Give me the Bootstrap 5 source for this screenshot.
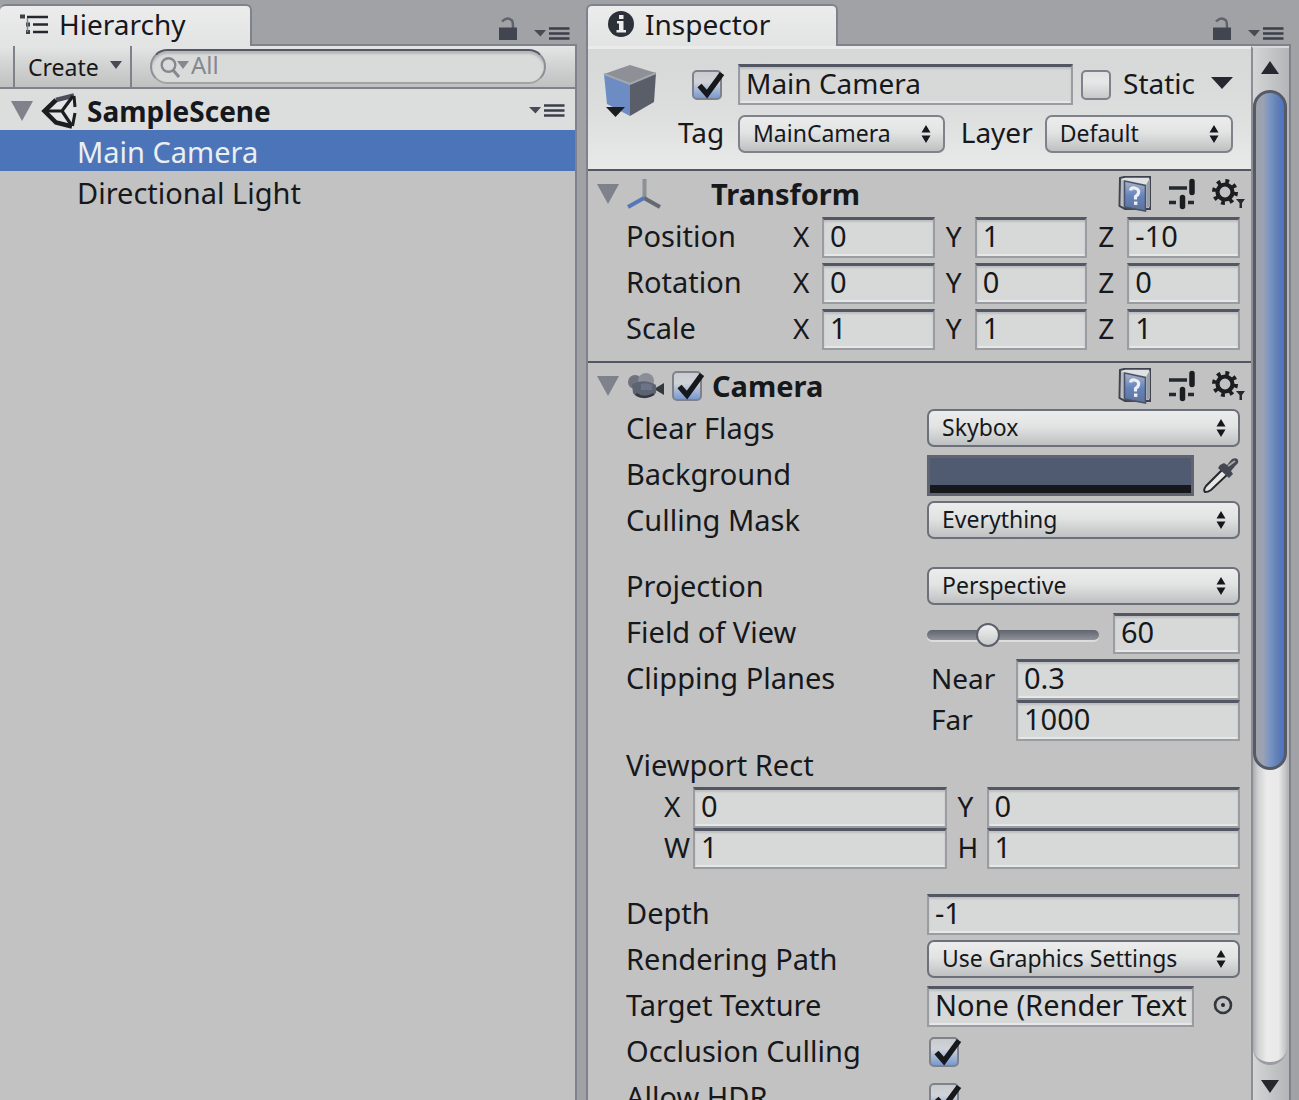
<!DOCTYPE html>
<html lang="en">
<head>
<meta charset="utf-8">
<meta name="viewport" content="width=device-width, initial-scale=1">
<title>Scene editor</title>
<link href="https://cdn.jsdelivr.net/npm/bootstrap@5.3.0/dist/css/bootstrap.min.css" rel="stylesheet">
<style>
:root{--ink:#16181b;--line:#7f828b;--dark:#535763;--face:#c2c2c2;--field:#d7d9d8;--blue:#4c75b9}
body{font-family:"Noto Sans","Open Sans",sans-serif;font-size:28px;line-height:38px;color:var(--ink);background:#a1a2a6}
.workspace{display:grid;grid-template-columns:577fr 705fr;column-gap:9px;padding:4px 8px 0 0;height:100vh;overflow:hidden}
.pane{min-width:0;min-height:0}
.tab-strip{height:42px;border-bottom:2px solid var(--line);padding-right:7px}
.pane-tab{width:252px;height:42px;margin-bottom:-2px;background:linear-gradient(#ececec,#e2e3e3);border:2px solid var(--line);border-bottom:0;border-radius:6px 6px 0 0;color:var(--ink);padding:0 0 4px 19px;text-align:left}
.hier .pane-tab{border-left:0}
.strip-tools{padding-bottom:3px}
.tab-name{padding-left:2px}
.pane-body{border:solid var(--line);border-width:0 2px;background:var(--face)}
.hier .pane-body{border-left:0}
.plain-btn{border:0;background:none;padding:0;color:inherit;line-height:0}
.tool-bar{height:43px;background:linear-gradient(#e4e5e5,#d2d3d3 45%,#c0c1c1);border-bottom:2px solid var(--line);padding:0 29px 0 13px}
.create-btn{width:119px;height:41px;border:solid var(--line);border-width:0 2px;background:none;font-size:23px;padding:0 8px 0 13px;color:var(--ink)}
.create-btn svg{color:#474b55}
.search-box{height:35px;border:2px solid #8b8e96;border-top-color:var(--dark);border-bottom-color:#a2a3a8;border-radius:18px;background:#d9dbda;box-shadow:inset 0 3px 2px #b6b8ba;padding-left:8px;margin-left:18px}
.search-box input{border:0;outline:0;background:none;font-size:24px;line-height:28px;padding:0 0 4px;min-width:0;color:var(--ink)}
.search-box input::placeholder{color:#85888e;opacity:1}
.scene-row{height:41px;background:#dcdedd;padding:2px 10px 0 11px}
.scene-name{font-size:28px;padding-left:2px}
.tree-item{height:41px;line-height:44px;font-size:29px;padding-left:77px;color:var(--ink);text-decoration:none}
.tree-item.current{background:var(--blue);color:#eceef0}
.obj-head{height:125px;background:linear-gradient(#d6d8d8,#dcdddd 50%,#e8e9e9);border-bottom:2px solid var(--dark);border-top:3px solid #ebebeb;padding:15px 18px 0 14px}
.obj-head label{padding-bottom:3px}
.obj-head .txt{font-size:28px}
.head-key{flex:0 0 60px}
.head-key.with-tick{padding-left:14px}
.pop.tag-pop{flex:208 1 0}
.pop.layer-pop{flex:184 1 0}
.layer-key{margin:0 12px 0 16px}
.comp{padding:0 11px 11px 38px;border-bottom:2px solid var(--dark)}
.comp-head{height:46px;margin-left:-29px;margin-right:-6px}
.comp-name{font-weight:700;font-size:29px;padding-left:6px}
.comp-name.no-tick{padding-left:50px}
.prop-row{height:41px;margin-bottom:5px;font-size:29px}
.prop-row label,.prop-row span{padding-bottom:3px}
.prop-row.tight{margin-bottom:0}
.prop-row.gap-after{margin-bottom:25px}
.prop-row.view-row{padding-left:38px}
.prop-key{flex:0 0 301px}
.axis-key{flex:0 0 167px}
.letter{flex:0 0 29px;font-size:28px}
.letter-next{flex-basis:40px;padding-left:11px}
.near-key{flex:0 0 89px;padding-left:4px;font-size:28px}
.txt{min-width:0;width:100%;height:41px;border:2px solid #9a9ca1;border-top:3px solid var(--dark);border-radius:0;background:var(--field);box-shadow:inset 0 2px 2px #bcbebf,inset 0 -2px 0 #e6e7e7;padding:0 4px 5px 6px;font-size:29px;line-height:32px;color:var(--ink);outline:0}
.pop{min-width:0;width:100%;height:38px;appearance:none;border:2px solid var(--line);border-radius:7px;color:var(--ink);font-size:23px;line-height:30px;padding:0 30px 2px 13px;background:url("data:image/svg+xml,%3Csvg xmlns='http://www.w3.org/2000/svg' width='10' height='18'%3E%3Cpath d='M5 0L9.500 7.500H.5zM5 18L.5 10.500H9.500z' fill='%2316181b'/%3E%3C/svg%3E") right 12px center no-repeat,linear-gradient(#ececec,#e2e3e3 45%,#bfc0c1)}
.comp .pop{border-color:#6c707a;margin-bottom:3px}
.tick{appearance:none;flex:0 0 34px;width:34px;height:34px;margin:0;background:url("data:image/svg+xml,%3Csvg xmlns='http://www.w3.org/2000/svg' width='34' height='34'%3E%3Cdefs%3E%3ClinearGradient id='g' x2='0' y2='1'%3E%3Cstop stop-color='%23e0e1e2'/%3E%3Cstop offset='.4' stop-color='%23e6e7e7'/%3E%3Cstop offset='1' stop-color='%23c6c7c8'/%3E%3C/linearGradient%3E%3C/defs%3E%3Crect x='1' y='3' width='28' height='28' rx='4' fill='url(%23g)' stroke='%237f828b' stroke-width='2'/%3E%3C/svg%3E") no-repeat}
.tick:checked{background-image:url("data:image/svg+xml,%3Csvg xmlns='http://www.w3.org/2000/svg' width='34' height='34'%3E%3Cdefs%3E%3ClinearGradient id='g' x2='0' y2='1'%3E%3Cstop stop-color='%23c8cace'/%3E%3Cstop offset='.4' stop-color='%23d0d3d8'/%3E%3Cstop offset='1' stop-color='%237396d0'/%3E%3C/linearGradient%3E%3C/defs%3E%3Crect x='1' y='3' width='28' height='28' rx='4' fill='url(%23g)' stroke='%237f828b' stroke-width='2'/%3E%3Cpath d='M7.500 17.500L15 26L30 5.500' fill='none' stroke='%2316181b' stroke-width='5.500'/%3E%3C/svg%3E")}
.box-in{margin:0 0 2px 2px}
.swatch-btn{height:41px;border:3px solid #606470;padding:0;background:linear-gradient(#505a71 0 27px,#16181b 27px)}
.side-tool{flex:0 0 46px}
.fov{appearance:none;flex:1 1 172px;min-width:0;height:30px;margin:3px 14px 0 0;background:none}
.fov::-webkit-slider-runnable-track{height:10px;border-radius:5px;background:linear-gradient(#60646e,#8f9198);box-shadow:0 2px 0 #dcdcdc}
.fov::-webkit-slider-thumb{appearance:none;width:24px;height:24px;margin-top:-7px;border:2px solid #5c606b;border-radius:50%;background:linear-gradient(#f0f0f0,#c9cacb)}
.fov-num{flex:0 0 127px}
.scroll-col{flex:0 0 38px;background:linear-gradient(90deg,#d4d5d5,#b4b5b8);border-left:2px solid #8b8e95;border-top:2px solid #d8d8d8;padding-right:2px}
.scroll-up{height:42px}
.scroll-down{height:35px}
.scroll-track{width:34px;background:linear-gradient(90deg,#a9abae,#d0d1d1 15%,#ebebeb 40%,#e9e9e9 75%,#bcbdc0);border-radius:17px;border-bottom:3px solid #9a9ca1}
.scroll-thumb{height:70%;background:linear-gradient(90deg,#a0a2a8,#9aa2b4 25%,#7391c4 55%,#6480b4 75%,#4c75c4 96%);border:3px solid #565a66;border-radius:17px}
</style>
</head>
<body>
<svg class="position-absolute" width="0" height="0" aria-hidden="true">
  <defs><linearGradient id="bk" x2="0" y2="1"><stop stop-color="#a9b4c8"/><stop offset=".5" stop-color="#6484bd"/><stop offset="1" stop-color="#5f7299"/></linearGradient></defs>
  <symbol id="i-lock" viewBox="0 0 20 24"><path d="M4 4.500Q9-1 14 3.500Q15 5 15 11" fill="none" stroke="#5f636d" stroke-width="2.500"/><path d="M1 10.500h18V23H1z" fill="#41454f"/></symbol>
  <symbol id="i-menu" viewBox="0 0 36 14"><path d="M0 3h12L6.500 9.500z" fill="#474b55"/><path d="M15 1.500h20.500M15 6.500h20.500M15 11.500h20.500" stroke="#3b3f49" stroke-width="2.400"/></symbol>
  <symbol id="i-down" viewBox="0 0 22 20"><path d="M0 0h22L11 20z" fill="#7f828b"/></symbol>
  <symbol id="i-small" viewBox="0 0 12 8"><path d="M0 0h12L6 8z" fill="currentColor"/></symbol>
  <symbol id="i-book" viewBox="0 0 34 36"><path d="M2 2L7 .8H32V33H28L7 33L1.500 30z" fill="#dfe1e3" stroke="#3f434d" stroke-width="2"/><path d="M3 3v26l4 2V6z" fill="#b9bcc2"/><path d="M6.500 5L27.500 9.500V35L6.500 31z" fill="url(#bk)" stroke="#4b5467" stroke-width="1.600"/><path d="M28.500 8V32L32 31V2z" fill="#9a9ea8"/><path d="M12.500 14.500Q13 11.500 16.500 12Q21.500 13 20.500 17Q20 19 17.500 20.500V23.500" fill="none" stroke="#eceef0" stroke-width="3.200"/><path d="M16 25.500h3.400v3.400H16z" fill="#eceef0"/></symbol>
  <symbol id="i-sliders" viewBox="0 0 28 32"><path d="M1 10h18M1 24.500h7M20 24.500h6" stroke="#25282e" stroke-width="3.600"/><path d="M24 3.500v11M14.500 19.500v9" stroke="#1b1d21" stroke-width="5.500" stroke-linecap="round"/></symbol>
  <symbol id="i-gear" viewBox="0 0 34 32"><circle cx="13" cy="14" r="7.500" fill="none" stroke="#1b1d21" stroke-width="4.200"/><circle cx="13" cy="14" r="11" fill="none" stroke="#1b1d21" stroke-width="4" stroke-dasharray="3.800 4.840"/><path d="M24 21h9l-3 4v5h-2.500v-5z" fill="#25282e"/></symbol>
</svg>

<div class="workspace">
  <section class="pane hier d-flex flex-column" aria-label="Hierarchy">
    <div class="tab-strip d-flex justify-content-between">
      <button class="pane-tab d-flex align-items-center" type="button">
        <svg width="30" height="22" viewBox="0 0 30 22" class="me-2"><path d="M8 4h21M14 11.500h15M14 19h15" stroke="#25282e" stroke-width="2.600"/><path d="M1 1.500h5v4H1zM7 9.500h4v4H7zM7 17h4v4H7z" fill="#3c4049"/><path d="M8.500 5v14" stroke="#7f828b" stroke-width="1.400"/></svg>
        <span class="tab-name">Hierarchy</span>
      </button>
      <div class="strip-tools d-flex align-items-end gap-3">
        <button class="plain-btn" type="button" aria-label="Lock"><svg width="20" height="24"><use href="#i-lock"/></svg></button>
        <button class="plain-btn" type="button" aria-label="Hierarchy menu"><svg width="36" height="14"><use href="#i-menu"/></svg></button>
      </div>
    </div>
    <div class="pane-body flex-grow-1">
      <div class="tool-bar d-flex align-items-center">
        <button class="create-btn d-flex justify-content-between align-items-center" type="button">Create<svg width="12" height="8" class="mb-1"><use href="#i-small"/></svg></button>
        <div class="search-box d-flex align-items-center flex-grow-1">
          <svg width="31" height="22" viewBox="0 0 31 22" fill="none"><circle cx="8.500" cy="9" r="6.800" stroke="#85888e" stroke-width="2.400"/><path d="M13 14l6 7" stroke="#85888e" stroke-width="3"/><path d="M17 5h12l-6 8z" fill="#85888e"/></svg>
          <input type="search" class="flex-grow-1" placeholder="All" aria-label="Search hierarchy">
        </div>
      </div>
      <div class="scene-row d-flex align-items-center">
        <button class="plain-btn" type="button" aria-label="Collapse scene"><svg width="22" height="20"><use href="#i-down"/></svg></button>
        <svg width="36" height="38" viewBox="0 0 36 38" class="ms-2 me-2" fill="none" stroke="#1b1d21"><path d="M33 2.500L15 7.500L3.500 19L15 30.500L32 35.500L34.500 21.500V13z" fill="#e4e5e5" stroke="none"/><path d="M33 3.500L15 8" stroke="#4b4f59" stroke-width="4.500"/><path d="M15 8L3.500 19L15 30.500L31 34.500" stroke-width="4.500"/><path d="M4 19H21L32 4M21 19L31 34" stroke-width="3.200"/><path d="M33 4L34 15M34 21L31.500 34" stroke-width="3"/></svg>
        <strong class="scene-name flex-grow-1">SampleScene</strong>
        <button class="plain-btn" type="button" aria-label="Scene menu"><svg width="36" height="14"><use href="#i-menu"/></svg></button>
      </div>
      <nav class="d-flex flex-column" aria-label="Scene objects">
        <a href="#" class="tree-item current" aria-current="true">Main Camera</a>
        <a href="#" class="tree-item">Directional Light</a>
      </nav>
    </div>
  </section>

  <section class="pane d-flex flex-column" aria-label="Inspector">
    <div class="tab-strip d-flex justify-content-between">
      <button class="pane-tab d-flex align-items-center" type="button">
        <svg width="28" height="28" viewBox="0 0 28 28" class="me-2"><circle cx="14" cy="14" r="13" fill="#2c3038"/><path d="M12 5h4.500v4H12zM10 11h6.500v9H19v2.500H9.500V20H12v-6.500h-2z" fill="#ececec"/></svg>
        <span class="tab-name">Inspector</span>
      </button>
      <div class="strip-tools d-flex align-items-end gap-3">
        <button class="plain-btn" type="button" aria-label="Lock"><svg width="20" height="24"><use href="#i-lock"/></svg></button>
        <button class="plain-btn" type="button" aria-label="Inspector menu"><svg width="36" height="14"><use href="#i-menu"/></svg></button>
      </div>
    </div>
    <div class="pane-body d-flex flex-grow-1 overflow-hidden">
      <div class="flex-grow-1 overflow-hidden">
        <header class="obj-head d-flex">
          <svg width="56" height="54" viewBox="0 0 56 54" class="flex-shrink-0 me-3"><path d="M28 1L54 9L28 20L2 10z" fill="#8d9097"/><path d="M2 10L28 20V52L5 40z" fill="#6d8cc4"/><path d="M54 9L28 20V52L52 38z" fill="#5a5e69"/><path d="M2 10L28 20L54 9" fill="none" stroke="#a5a7ac" stroke-width="2"/><path d="M4 43h19l-9.500 10z" fill="#1b1d21"/></svg>
          <div class="flex-grow-1 ms-1">
            <div class="d-flex align-items-center">
              <div class="head-key with-tick d-flex"><input type="checkbox" class="tick" checked aria-label="Object active"></div>
              <input class="txt flex-grow-1" type="text" value="Main Camera" aria-label="Object name">
              <input type="checkbox" class="tick ms-2" id="st"><label for="st" class="ms-2">Static</label>
              <button class="plain-btn ms-3" type="button" aria-label="Static options"><svg width="22" height="12" viewBox="0 0 22 12" class="mb-1"><path d="M0 0h22L11 12z" fill="#25282e"/></svg></button>
            </div>
            <div class="d-flex align-items-center mt-2">
              <label for="tag" class="head-key">Tag</label>
              <select id="tag" class="pop tag-pop"><option>MainCamera</option></select>
              <label for="layer" class="layer-key">Layer</label>
              <select id="layer" class="pop layer-pop"><option>Default</option></select>
            </div>
          </div>
        </header>

        <section class="comp">
          <div class="comp-head d-flex align-items-center">
            <button class="plain-btn" type="button" aria-label="Collapse Transform"><svg width="22" height="20"><use href="#i-down"/></svg></button>
            <svg width="34" height="34" viewBox="0 0 34 34" class="ms-2" fill="none" stroke-width="4"><path d="M17.500 2v19" stroke="#8d9097"/><path d="M17 21L33 30" stroke="#646873"/><path d="M17 21L1 30" stroke="#5379b8"/></svg>
            <div class="comp-name no-tick flex-grow-1">Transform</div>
            <div class="d-flex align-items-center gap-3">
              <button class="plain-btn" type="button" aria-label="Transform help"><svg width="34" height="36"><use href="#i-book"/></svg></button>
              <button class="plain-btn" type="button" aria-label="Transform presets"><svg width="28" height="32"><use href="#i-sliders"/></svg></button>
              <button class="plain-btn" type="button" aria-label="Transform options"><svg width="34" height="32"><use href="#i-gear"/></svg></button>
            </div>
          </div>
          <div class="prop-row d-flex" role="group" aria-labelledby="kp">
            <span class="axis-key" id="kp">Position</span>
            <div class="d-flex flex-grow-1">
              <label class="letter" for="px">X</label><input class="txt" id="px" value="0">
              <label class="letter letter-next" for="py">Y</label><input class="txt" id="py" value="1">
              <label class="letter letter-next" for="pz">Z</label><input class="txt" id="pz" value="-10">
            </div>
          </div>
          <div class="prop-row d-flex" role="group" aria-labelledby="kr">
            <span class="axis-key" id="kr">Rotation</span>
            <div class="d-flex flex-grow-1">
              <label class="letter" for="rx">X</label><input class="txt" id="rx" value="0">
              <label class="letter letter-next" for="ry">Y</label><input class="txt" id="ry" value="0">
              <label class="letter letter-next" for="rz">Z</label><input class="txt" id="rz" value="0">
            </div>
          </div>
          <div class="prop-row tight d-flex" role="group" aria-labelledby="ks">
            <span class="axis-key" id="ks">Scale</span>
            <div class="d-flex flex-grow-1">
              <label class="letter" for="sx">X</label><input class="txt" id="sx" value="1">
              <label class="letter letter-next" for="sy">Y</label><input class="txt" id="sy" value="1">
              <label class="letter letter-next" for="sz">Z</label><input class="txt" id="sz" value="1">
            </div>
          </div>
        </section>

        <section class="comp">
          <div class="comp-head d-flex align-items-center">
            <button class="plain-btn" type="button" aria-label="Collapse Camera"><svg width="22" height="20"><use href="#i-down"/></svg></button>
            <svg width="37" height="26" viewBox="0 0 37 26" class="ms-2"><circle cx="8" cy="9" r="7" fill="#6e727c"/><circle cx="19" cy="8" r="8" fill="#8b8e96"/><path d="M27 16l10-6v12z" fill="#33373f"/><path d="M5 11Q17 5 29 12V20Q24 25 17 25Q9 25 6 20z" fill="#5d6471"/><path d="M14 11Q20 9 25 12V17H14z" fill="#6b7488"/><path d="M9 21Q17 27 27 21" fill="none" stroke="#33373f" stroke-width="2.500"/></svg>
            <input type="checkbox" class="tick ms-2" checked id="cam">
            <label for="cam" class="comp-name flex-grow-1">Camera</label>
            <div class="d-flex align-items-center gap-3">
              <button class="plain-btn" type="button" aria-label="Camera help"><svg width="34" height="36"><use href="#i-book"/></svg></button>
              <button class="plain-btn" type="button" aria-label="Camera presets"><svg width="28" height="32"><use href="#i-sliders"/></svg></button>
              <button class="plain-btn" type="button" aria-label="Camera options"><svg width="34" height="32"><use href="#i-gear"/></svg></button>
            </div>
          </div>
          <div class="prop-row d-flex align-items-center"><label class="prop-key" for="cf">Clear Flags</label><select id="cf" class="pop"><option>Skybox</option></select></div>
          <div class="prop-row d-flex align-items-center"><label class="prop-key" for="bg">Background</label>
            <button id="bg" type="button" class="swatch-btn flex-grow-1" aria-label="Background colour"></button>
            <button type="button" class="plain-btn side-tool text-end" aria-label="Pick colour"><svg width="38" height="38" viewBox="0 0 38 38"><path d="M3 35Q1 33 4 29L22 11L27 16L9 33Q6 35 3 35z" fill="#e6e7e7" stroke="#25282e" stroke-width="2"/><path d="M18 8L22 6L25 8L30 2Q35 0 36 3Q37 6 34 8L29 14L31 17L27 21L16 11z" fill="#444852"/><path d="M26 9L33 4" stroke="#a5a7ac" stroke-width="2"/></svg></button></div>
          <div class="prop-row gap-after d-flex align-items-center"><label class="prop-key" for="cm">Culling Mask</label><select id="cm" class="pop"><option>Everything</option></select></div>
          <div class="prop-row d-flex align-items-center"><label class="prop-key" for="pj">Projection</label><select id="pj" class="pop"><option>Perspective</option></select></div>
          <div class="prop-row d-flex align-items-center"><label class="prop-key" for="fv">Field of View</label><input type="range" class="fov" min="1" max="179" value="60" aria-label="Field of View slider"><div class="fov-num d-flex"><input class="txt" id="fv" value="60"></div></div>
          <div class="prop-row tight d-flex"><span class="prop-key">Clipping Planes</span><label class="near-key" for="nr">Near</label><input class="txt" id="nr" value="0.3"></div>
          <div class="prop-row d-flex"><span class="prop-key"></span><label class="near-key" for="fr">Far</label><input class="txt" id="fr" value="1000"></div>
          <div class="prop-row tight">Viewport Rect</div>
          <div class="prop-row tight d-flex view-row"><label class="letter" for="vx">X</label><input class="txt" id="vx" value="0"><label class="letter letter-next" for="vy">Y</label><input class="txt" id="vy" value="0"></div>
          <div class="prop-row gap-after d-flex view-row"><label class="letter" for="vw">W</label><input class="txt" id="vw" value="1"><label class="letter letter-next" for="vh">H</label><input class="txt" id="vh" value="1"></div>
          <div class="prop-row d-flex"><label class="prop-key" for="dp">Depth</label><input class="txt" id="dp" value="-1"></div>
          <div class="prop-row d-flex align-items-center"><label class="prop-key" for="rp">Rendering Path</label><select id="rp" class="pop"><option>Use Graphics Settings</option></select></div>
          <div class="prop-row d-flex align-items-center"><label class="prop-key" for="tt">Target Texture</label><input class="txt flex-grow-1" id="tt" value="None (Render Text"><button type="button" class="plain-btn side-tool text-center ps-2" aria-label="Select texture"><svg width="20" height="20" viewBox="0 0 20 20" class="ms-1 mb-1"><circle cx="10" cy="10" r="8" fill="none" stroke="#33373f" stroke-width="2.600"/><circle cx="10" cy="10" r="2" fill="#25282e"/></svg></button></div>
          <div class="prop-row d-flex align-items-center"><label class="prop-key" for="oc">Occlusion Culling</label><input type="checkbox" class="tick box-in" id="oc" checked></div>
          <div class="prop-row d-flex align-items-center"><label class="prop-key" for="hd">Allow HDR</label><input type="checkbox" class="tick box-in" id="hd" checked></div>
        </section>
      </div>
      <div class="scroll-col d-flex flex-column align-items-center">
        <button class="plain-btn scroll-up" type="button" aria-label="Scroll up"><svg width="18" height="13" viewBox="0 0 18 13" class="mb-1"><path d="M9 0L18 13H0z" fill="#25282e"/></svg></button>
        <div class="scroll-track flex-grow-1"><div class="scroll-thumb"></div></div>
        <button class="plain-btn scroll-down" type="button" aria-label="Scroll down"><svg width="18" height="13" viewBox="0 0 18 13" class="mt-2"><path d="M9 13L18 0H0z" fill="#25282e"/></svg></button>
      </div>
    </div>
  </section>
</div>
<script src="https://cdn.jsdelivr.net/npm/bootstrap@5.3.0/dist/js/bootstrap.bundle.min.js"></script>
</body>
</html>
